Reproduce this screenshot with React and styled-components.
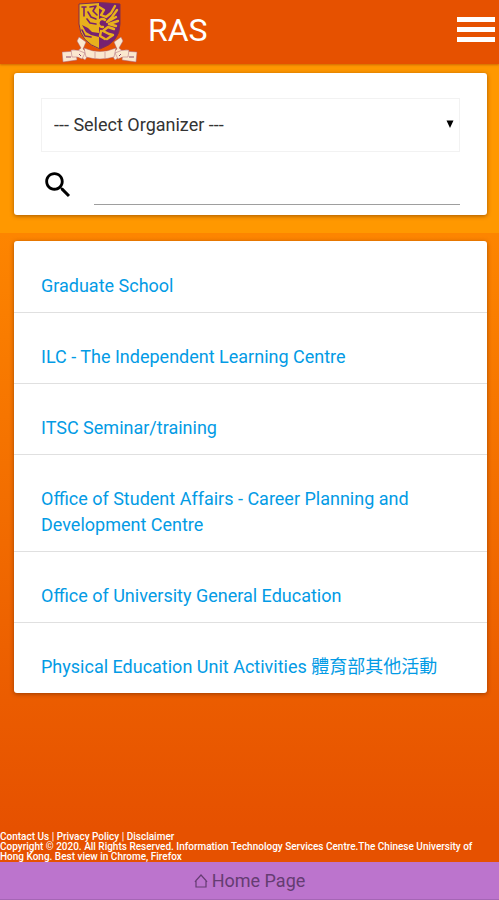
import React from "react";
import styled, { createGlobalStyle } from "styled-components";

const GlobalStyle = createGlobalStyle`
  *, *::before, *::after {
    box-sizing: border-box;
  }

  body {
    margin: 0;
    font-family: Roboto, "Noto Sans CJK TC", sans-serif;
    background-color: #e65100;
  }
`;

const Page = styled.div`
  display: flex;
  flex-direction: column;
  min-height: 100vh;
  background: linear-gradient(#ff9800 0%, #fd8500 26%, #e65100 92%);
`;

const Header = styled.header`
  display: flex;
  align-items: center;
  height: 64px;
  padding: 0 4px 0 62px;
  background-color: #e65100;
  box-shadow: 0 1px 2px rgba(160, 60, 0, 0.5);
  z-index: 1;
`;

const Title = styled.h1`
  flex: 1;
  margin: 0 0 4px 10px;
  font-size: 32px;
  line-height: 40px;
  font-weight: 400;
  color: #fff;
`;

const MenuButton = styled.button`
  display: flex;
  flex-direction: column;
  gap: 5px;
  width: 38px;
  margin-bottom: 6px;
  padding: 0;
  border: none;
  background: none;
  cursor: pointer;
`;

const MenuBar = styled.span`
  width: 100%;
  height: 5px;
  background-color: #fff;
`;

const SearchBand = styled.section`
  padding: 9px 12px 18px 14px;
  background-color: #ff9800;
`;

const Card = styled.div`
  background-color: #fff;
  border-radius: 3px;
  box-shadow: 0 1px 4px rgba(80, 30, 0, 0.5);
`;

const SearchForm = styled(Card).attrs({ as: "form" })`
  padding: 25px 27px 10px;
`;

const SelectField = styled.div`
  position: relative;
`;

const Select = styled.select`
  display: block;
  width: 100%;
  height: 54px;
  padding: 0 12px 2px;
  appearance: none;
  border: 1px solid #f2f2f2;
  border-radius: 0;
  background-color: #fff;
  font-family: inherit;
  font-size: 18px;
  color: #333;
`;

const Caret = styled.svg`
  position: absolute;
  top: 22px;
  right: 6px;
  width: 8px;
  height: 8px;
  pointer-events: none;
`;

const SearchField = styled.div`
  display: flex;
  align-items: flex-end;
  gap: 17px;
  height: 53px;
`;

const SearchLabel = styled.label`
  display: flex;
  width: 36px;
  padding-bottom: 3px;
`;

const SearchInput = styled.input`
  flex: 1;
  min-width: 0;
  height: 53px;
  padding: 0;
  border: none;
  border-bottom: 1px solid #9e9e9e;
  outline: none;
  background: transparent;
  font-family: inherit;
  font-size: 18px;
`;

const Main = styled.main`
  flex: 1;
  padding: 8px 12px 24px 14px;
`;

const OrganizerList = styled(Card).attrs({ as: "ul" })`
  margin: 0;
  padding: 1px 0 0;
  list-style: none;
`;

const OrganizerItem = styled.li`
  padding: 31px 27px 13px;
  border-bottom: 1px solid #e0e0e0;
  font-size: 18px;
  line-height: 26px;

  &:last-child {
    border-bottom: none;
  }
`;

const OrganizerLink = styled.a`
  color: #039be5;
  text-decoration: none;
`;

const Footer = styled.footer`
  padding-right: 12px;
  font-size: 10px;
  line-height: 10px;
  font-weight: 500;
  color: #fff;
`;

const FooterLink = styled.a`
  color: inherit;
  text-decoration: none;
`;

const HomeLink = styled.a`
  display: flex;
  align-items: center;
  justify-content: center;
  gap: 4px;
  height: 38px;
  border-bottom: 1px solid #a566b5;
  background-color: #bc74cd;
  font-size: 18px;
  color: #653c72;
  text-decoration: none;
`;

const organizers = [
  "Graduate School",
  "ILC - The Independent Learning Centre",
  "ITSC Seminar/training",
  "Office of Student Affairs - Career Planning and Development Centre",
  "Office of University General Education",
  "Physical Education Unit Activities 體育部其他活動",
];

const Crest = () => (
  <svg width="76" height="62" viewBox="0 0 76 62" role="img" aria-label="University crest">
    {/* ribbon */}
    <g fill="#fbe8cf" stroke="#a8657a" strokeWidth="0.5" strokeLinejoin="round">
      <path d="M17 36l7 5-3 7 6 5-4 6-10-7 6-5-4-7z" />
      <path d="M59 36l-7 5 3 7-6 5 4 6 10-7-6-5 4-7z" />
      <path d="M0 51l14-1 1 9-14 2z" />
      <path d="M75 51l-14-1-1 9 14 2z" />
      <path d="M9 49q7-1 14 3l-3 6q-5-3-10-2z" />
      <path d="M67 49q-7-1-14 3l3 6q5-3 10-2z" />
      <path d="M22 47q16 7 32 0l-2 9q-14 4-28 0z" />
      <path d="M33 51v6M43 51v6" fill="none" />
    </g>
    <path d="M4 56h5M67 56h5M17 53l2 2M57 55l2-2" stroke="#8d4a6c" strokeWidth="1" />
    {/* shield */}
    <path d="M17 3q20-3 41 0v20q0 18-20 25Q18 41 17 23z" fill="#762170" />
    <path d="M17 3q10-1 20-1v46Q18 41 17 23z" fill="#e8b11c" />
    <g fill="none" stroke="#762170" strokeWidth="1.6" strokeLinecap="round" strokeLinejoin="round">
      <path d="M20 6h4M22 7v8" />
      <path d="M28 6l6-1-3 5 4 4M26 11l3 5 5 2M25 18l3 4 6 1" />
      <path d="M20 29l3 6 6 1" />
    </g>
    <path d="M20 24l6 3 4 4 7 1v4l-8-2-5-3z" fill="#762170" />
    <g fill="none" stroke="#e8b11c" strokeWidth="2.4" strokeLinecap="round" strokeLinejoin="round">
      <path d="M37 6l5 3-3 5 5 2 5-4 4-7" />
      <path d="M55 9l-5 7-5 5 9-5M56 20l-9 3 7 2M52 28l-6-2-5 4 6 3 4 1-6 4" />
      <path d="M43 19a4 4 0 1 0-2 7M39 30l-1 5 5 3" />
    </g>
    <path d="M17 3q20-3 41 0v20q0 18-20 25Q18 41 17 23z" fill="none" stroke="#81304f" strokeWidth="1" />
  </svg>
);

const App = () => {
  return (
    <Page>
      <GlobalStyle />
      <Header>
        <Crest />
        <Title>RAS</Title>
        <MenuButton type="button" aria-label="Menu">
          <MenuBar />
          <MenuBar />
          <MenuBar />
        </MenuButton>
      </Header>
      <SearchBand>
        <SearchForm>
          <SelectField>
            <Select aria-label="Organizer" defaultValue="">
              <option value="">--- Select Organizer ---</option>
              {organizers.map((name) => (
                <option key={name} value={name}>
                  {name}
                </option>
              ))}
            </Select>
            <Caret viewBox="0 0 8 8" aria-hidden="true">
              <path d="M0.5 0.5h7L4 8z" fill="#000" />
            </Caret>
          </SelectField>
          <SearchField>
            <SearchLabel htmlFor="keyword" aria-label="Search">
              <svg width="34" height="34" viewBox="0 0 24 24" aria-hidden="true">
                <path
                  d="M15.5 14h-.79l-.28-.27C15.41 12.59 16 11.11 16 9.5 16 5.91 13.09 3 9.5 3S3 5.91 3 9.5 5.91 16 9.5 16c1.61 0 3.09-.59 4.23-1.57l.27.28v.79l5 4.99L20.49 19l-4.99-5zm-6 0C7.01 14 5 11.99 5 9.5S7.01 5 9.5 5 14 7.01 14 9.5 11.99 14 9.5 14z"
                  fill="#000"
                />
              </svg>
            </SearchLabel>
            <SearchInput id="keyword" type="text" />
          </SearchField>
        </SearchForm>
      </SearchBand>
      <Main>
        <OrganizerList>
          {organizers.map((name) => (
            <OrganizerItem key={name}>
              <OrganizerLink href="#">{name}</OrganizerLink>
            </OrganizerItem>
          ))}
        </OrganizerList>
      </Main>
      <Footer>
        <FooterLink href="#">Contact Us</FooterLink> | <FooterLink href="#">Privacy Policy</FooterLink> |{" "}
        <FooterLink href="#">Disclaimer</FooterLink>
        <br />
        Copyright © 2020. All Rights Reserved. Information Technology Services Centre.The Chinese University of Hong
        Kong. Best view in Chrome, Firefox
      </Footer>
      <HomeLink href="#">
        <svg width="14" height="14" viewBox="0 0 14 14" aria-hidden="true">
          <path d="M7 1L2 6.5V13h10V6.5zM2 6.5L1 8M12 6.5L13 8" fill="none" stroke="#653c72" strokeWidth="1.2" />
        </svg>
        Home Page
      </HomeLink>
    </Page>
  );
};

export default App;
